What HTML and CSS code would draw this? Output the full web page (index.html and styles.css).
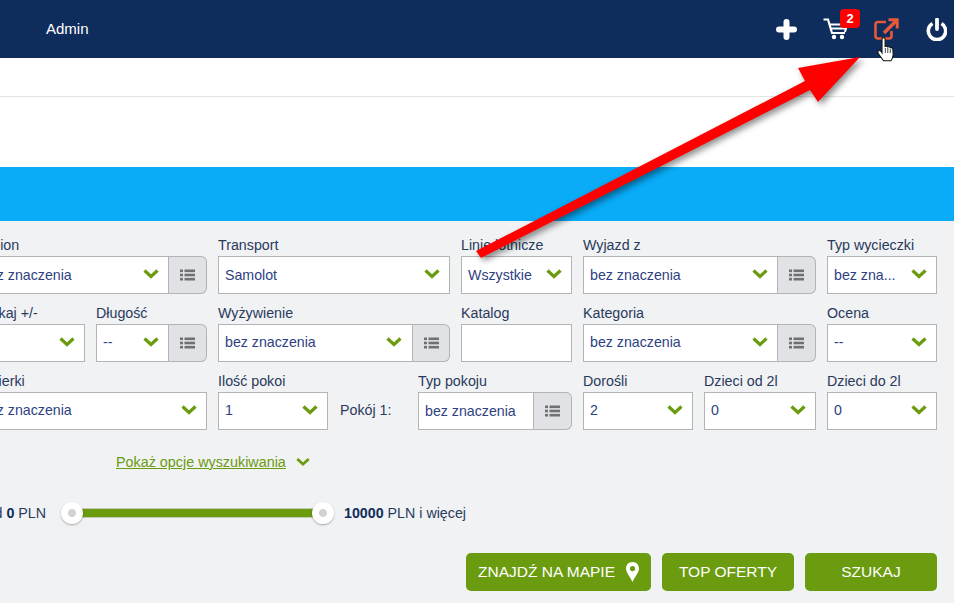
FILE: index.html
```html
<!DOCTYPE html>
<html lang="pl">
<head>
<meta charset="utf-8">
<title>Admin</title>
<link rel="stylesheet" href="styles.css">
</head>
<body>
<svg width="0" height="0" class="defs">
  <symbol id="chev" viewBox="0 0 16 10"><path d="M1.5 1.5 L8 7.5 L14.5 1.5" fill="none" stroke="#6b9b0f" stroke-width="3.2"/></symbol>
  <symbol id="list" viewBox="0 0 15 12"><g fill="#6f7174"><rect x="0" y="0.5" width="3" height="2.6"/><rect x="0" y="4.7" width="3" height="2.6"/><rect x="0" y="8.9" width="3" height="2.6"/><rect x="4.5" y="0.5" width="10.5" height="2.6"/><rect x="4.5" y="4.7" width="10.5" height="2.6"/><rect x="4.5" y="8.9" width="10.5" height="2.6"/></g></symbol>
</svg>

<header class="topbar">
  <span class="user">Admin</span>
  <nav class="tools">
    <svg class="ico" width="21" height="21" viewBox="0 0 21 21"><path d="M10.5 3 V18 M3 10.5 H18" stroke="#fff" stroke-width="6" stroke-linecap="round"/></svg>
    <span class="cart">
      <svg class="ico" width="24" height="22" viewBox="0 0 24 22"><path d="M0.5 1.500 H5 L9 15 H22" fill="none" stroke="#fff" stroke-width="2.200"/><path d="M6.500 6.500 H24 L22 14 M7.500 10.500 H23" fill="none" stroke="#fff" stroke-width="2"/><circle cx="11" cy="19" r="2.200" fill="#fff"/><circle cx="19" cy="19" r="2.200" fill="#fff"/></svg>
      <b class="badge">2</b>
    </span>
    <svg class="ico" width="26" height="24" viewBox="0 0 26 24"><path d="M13 5 H5 Q2.500 5 2.500 7.500 V19 Q2.500 21.500 5 21.500 H16 Q18.500 21.500 18.500 19 V14" fill="none" stroke="#e8593a" stroke-width="2.600"/><path d="M11 16 L23 4" fill="none" stroke="#e8593a" stroke-width="3.600"/><path d="M15.500 2.800 H24.200 V11.500" fill="none" stroke="#e8593a" stroke-width="3"/></svg>
    <svg class="ico" width="22" height="23" viewBox="0 0 22 23"><path d="M7.500 5.500 A8.700 8.700 0 1 0 16.500 5.500" fill="none" stroke="#fff" stroke-width="3.600"/><path d="M12 1.500 V11" stroke="#fff" stroke-width="3.800" stroke-linecap="round"/></svg>
  </nav>
</header>

<div class="band"></div>
<div class="band-blue"></div>

<main class="search">
  <div class="grid">
    <div class="f s2"><label>Region</label><div class="ctl"><div class="sel"><span class="v">bez znaczenia</span><svg class="chev"><use href="#chev"/></svg></div><div class="lb"><svg class="list"><use href="#list"/></svg></div></div></div>
    <div class="f s2"><label>Transport</label><div class="ctl"><div class="sel"><span class="v">Samolot</span><svg class="chev"><use href="#chev"/></svg></div></div></div>
    <div class="f"><label>Linie lotnicze</label><div class="ctl"><div class="sel"><span class="v">Wszystkie</span><svg class="chev"><use href="#chev"/></svg></div></div></div>
    <div class="f s2"><label>Wyjazd z</label><div class="ctl"><div class="sel"><span class="v">bez znaczenia</span><svg class="chev"><use href="#chev"/></svg></div><div class="lb"><svg class="list"><use href="#list"/></svg></div></div></div>
    <div class="f"><label>Typ wycieczki</label><div class="ctl"><div class="sel"><span class="v">bez zna...</span><svg class="chev"><use href="#chev"/></svg></div></div></div>

    <div class="f"><label>Szukaj +/-</label><div class="ctl"><div class="sel"><span class="v"></span><svg class="chev"><use href="#chev"/></svg></div></div></div>
    <div class="f"><label>Długość</label><div class="ctl"><div class="sel"><span class="v">--</span><svg class="chev"><use href="#chev"/></svg></div><div class="lb"><svg class="list"><use href="#list"/></svg></div></div></div>
    <div class="f s2"><label>Wyżywienie</label><div class="ctl"><div class="sel sel-n"><span class="v">bez znaczenia</span><svg class="chev"><use href="#chev"/></svg></div><div class="lb lb-n"><svg class="list"><use href="#list"/></svg></div></div></div>
    <div class="f"><label>Katalog</label><div class="ctl"><div class="sel"></div></div></div>
    <div class="f s2"><label>Kategoria</label><div class="ctl"><div class="sel"><span class="v">bez znaczenia</span><svg class="chev"><use href="#chev"/></svg></div><div class="lb"><svg class="list"><use href="#list"/></svg></div></div></div>
    <div class="f"><label>Ocena</label><div class="ctl"><div class="sel"><span class="v">--</span><svg class="chev"><use href="#chev"/></svg></div></div></div>

    <div class="f s2"><label>Krwierki</label><div class="ctl"><div class="sel"><span class="v">bez znaczenia</span><svg class="chev"><use href="#chev"/></svg></div></div></div>
    <div class="f"><label>Ilość pokoi</label><div class="ctl"><div class="sel"><span class="v">1</span><svg class="chev"><use href="#chev"/></svg></div></div></div>
    <div class="room s2">
      <span class="room-name">Pokój 1:</span>
      <div class="f grow"><label>Typ pokoju</label><div class="ctl"><div class="sel"><span class="v">bez znaczenia</span></div><div class="lb"><svg class="list"><use href="#list"/></svg></div></div></div>
    </div>
    <div class="f"><label>Dorośli</label><div class="ctl"><div class="sel"><span class="v">2</span><svg class="chev"><use href="#chev"/></svg></div></div></div>
    <div class="f"><label>Dzieci od 2l</label><div class="ctl"><div class="sel"><span class="v">0</span><svg class="chev"><use href="#chev"/></svg></div></div></div>
    <div class="f"><label>Dzieci do 2l</label><div class="ctl"><div class="sel"><span class="v">0</span><svg class="chev"><use href="#chev"/></svg></div></div></div>
  </div>

  <div class="more"><a href="#" class="more-link">Pokaż opcje wyszukiwania</a><svg class="more-chev"><use href="#chev"/></svg></div>

  <div class="price">
    <span class="price-from">od <b>0</b> PLN</span>
    <div class="track"><i class="knob k1"></i><i class="knob k2"></i></div>
    <span class="price-to"><b>10000</b> PLN i więcej</span>
  </div>

  <div class="actions">
    <button class="btn b1">ZNAJDŹ NA MAPIE<svg class="pin" width="13" height="20" viewBox="0 0 13 20"><path fill-rule="evenodd" d="M6.500 0 C10.300 0 13 2.800 13 6.500 C13 10.500 8.500 15.500 6.500 20 C4.500 15.500 0 10.500 0 6.500 C0 2.800 2.700 0 6.500 0 Z M6.500 4 A2.600 2.600 0 1 0 6.500 9.200 A2.600 2.600 0 1 0 6.500 4 Z" fill="#fff"/></svg></button>
    <button class="btn b2">TOP OFERTY</button>
    <button class="btn b3">SZUKAJ</button>
  </div>
</main>

<svg class="arrow" width="954" height="603" viewBox="0 0 954 603"><polygon points="476,251 805,81 798,68 860,57 818,102 810,90 481,258" fill="#ff0000"/></svg>

<svg class="hand" width="18" height="25" viewBox="0 0 18 25"><path d="M5 2 Q5 0.600 6.500 0.600 Q8.100 0.600 8.100 2 V9.500 Q10.200 8.500 10.800 10 Q12.600 9.200 13.300 10.800 Q15.300 10.200 15.800 12 L16.200 17.500 Q16 21 14 23.800 H6.500 L1.300 16.500 Q0.200 14.300 1.800 13.600 Q3.500 13.200 5 15.800 Z" fill="#fff" stroke="#111" stroke-width="1.100"/><path d="M8.300 11 V16 M10.800 11 V16 M13.300 12 V16" stroke="#333" stroke-width="0.900"/></svg>
</body>
</html>
```
FILE: styles.css
```css
* { box-sizing: border-box; }
html, body { margin: 0; height: 603px; overflow: hidden; }
body {
  position: relative;
  width: 954px;
  background: #f1f2f4;
  color: #2a3a5c;
  font: 14.25px/20px "Liberation Sans", Arial, sans-serif;
}
.defs { position: absolute; }

.topbar {
  display: flex;
  align-items: center;
  height: 58px;
  padding: 0 7px 0 46px;
  background: #0f2d5c;
}
.user { color: #fff; font-size: 15px; }
.tools { display: flex; align-items: center; gap: 26px; margin-left: auto; }
.ico { display: block; }
.cart { position: relative; display: block; }
.badge {
  position: absolute;
  left: 17px;
  top: -9px;
  width: 20px;
  height: 19px;
  border-radius: 4px;
  background: #f00;
  color: #fff;
  font-size: 13px;
  line-height: 19px;
  text-align: center;
}

.band {
  height: 109px;
  background: linear-gradient(#fff 38px, #e4e4e4 38px, #e4e4e4 39px, #fff 39px);
}
.band-blue { height: 54px; background: #0aabf7; }

.search { padding-top: 15px; }

.grid {
  display: grid;
  grid-template-columns: 111px 111px 110px 111px 111px 110px 112px 110px;
  column-gap: 11px;
  row-gap: 10px;
  margin-left: -26px;
  width: 980px;
}
.s2 { grid-column: span 2; }
.f { min-width: 0; }
.f label { display: block; height: 20px; line-height: 18px; white-space: nowrap; }
.ctl { display: flex; height: 38px; }
.sel {
  flex: 1;
  min-width: 0;
  display: flex;
  align-items: center;
  padding: 0 9px 0 6px;
  border: 1px solid #b4b4b4;
  background: #fff;
}
.sel-n { padding-right: 10px; }
.v {
  flex: 1;
  min-width: 0;
  color: #2f3f82;
  font-size: 14.2px;
  white-space: nowrap;
  overflow: hidden;
}
.grid > :nth-child(n+6) .v { margin-top: -2px; }
.grid > .room .v { margin-top: 0; }
.chev { flex: none; width: 16px; height: 10px; margin-top: -3px; }
.lb {
  flex: none;
  width: 38px;
  display: flex;
  align-items: center;
  justify-content: center;
  border: 1px solid #b4b4b4;
  border-left: 0;
  border-radius: 0 6px 6px 0;
  background: #e0e2e6;
}
.lb-n { width: 37px; }
.list { width: 15px; height: 12px; }

.room { display: flex; align-items: flex-end; }
.room-name { flex: none; width: 79px; height: 38px; line-height: 36px; padding-left: 1px; }
.grow { flex: 1; }

.more { display: flex; align-items: center; height: 20px; margin-top: 22px; padding-left: 116px; }
.more-link { color: #6b9b0f; font-size: 14.35px; text-decoration: underline; }
.more-chev { width: 14px; height: 10px; margin-left: 10px; }

.price { display: flex; align-items: center; height: 24px; margin-top: 29px; margin-left: -26px; }
.price-from { flex: none; width: 72px; text-align: right; white-space: nowrap; }
.track {
  position: relative;
  flex: none;
  width: 251px;
  height: 10px;
  margin-left: 26px;
  background: #6b9b0f;
  border: 1px solid #c6cbb8;
  border-width: 1px 0;
}
.knob {
  position: absolute;
  top: -7px;
  width: 22px;
  height: 22px;
  border-radius: 50%;
  background: radial-gradient(circle, #d2d2d2 0 3.500px, #fff 4.500px);
  box-shadow: 0 1px 2px rgba(0,0,0,.35);
}
.k1 { left: -11px; }
.k2 { right: -11px; }
.price-to { margin-left: 21px; white-space: nowrap; }
.price b { color: #0f2d5c; }

.actions { display: flex; justify-content: flex-end; gap: 11px; margin-top: 28px; padding-right: 17px; }
.btn {
  display: flex;
  align-items: center;
  justify-content: center;
  height: 38px;
  border: 0;
  border-radius: 5px;
  background: #6b9b0f;
  color: #fff;
  font: 15.5px "Liberation Sans", Arial, sans-serif;
}
.b1 { width: 185px; }
.b2 { width: 132px; }
.b3 { width: 132px; }
.pin { margin-left: 11px; }

.arrow {
  position: absolute;
  left: 0;
  top: 0;
  pointer-events: none;
  filter: drop-shadow(3px 3px 3px rgba(0,0,0,.45));
}
.hand { position: absolute; left: 877px; top: 37px; }
```
